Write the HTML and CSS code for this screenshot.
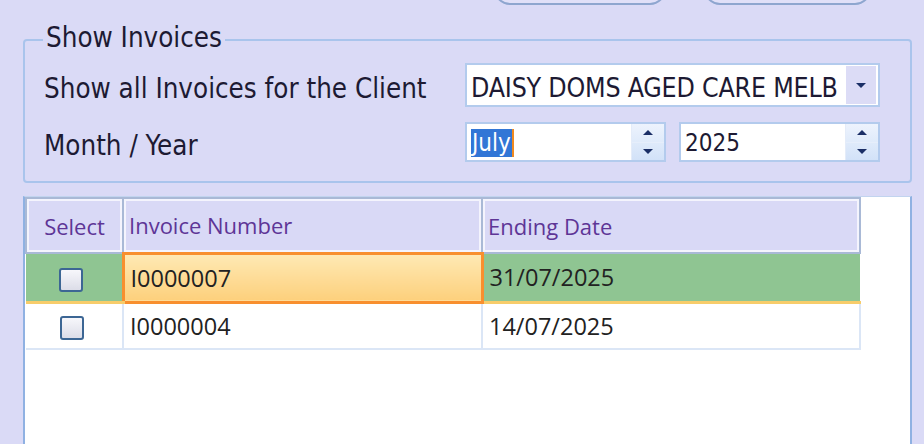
FILE: index.html
```html
<!DOCTYPE html>
<html>
<head>
<meta charset="utf-8">
<link rel="stylesheet" href="styles.css">
</head>
<body>
<div class="page">
  <div class="topbar">
    <div class="topbtn b1"></div>
    <div class="topbtn b2"></div>
  </div>
  <fieldset class="group">
    <legend class="legend">Show Invoices</legend>
    <div class="row r1">
      <span class="label">Show all Invoices for the Client</span>
      <div class="combo">
        <span class="combo-text">DAISY DOMS AGED CARE MELB</span>
        <span class="drop"><svg width="12" height="7" viewBox="0 0 12 7"><path d="M1 1h10L6 6z" fill="#1b2f66"/></svg></span>
      </div>
    </div>
    <div class="row r2">
      <span class="label">Month / Year</span>
      <div class="spins">
        <div class="spin">
          <span class="spin-text"><span class="sel">July</span><span class="caret"></span></span>
          <span class="spinbtn">
            <span class="half"><svg width="12" height="7" viewBox="0 0 12 7"><path d="M1 6h10L6 1z" fill="#1b2f66"/></svg></span>
            <span class="half"><svg width="12" height="7" viewBox="0 0 12 7"><path d="M1 1h10L6 6z" fill="#1b2f66"/></svg></span>
          </span>
        </div>
        <div class="spin">
          <span class="spin-text">2025</span>
          <span class="spinbtn">
            <span class="half"><svg width="12" height="7" viewBox="0 0 12 7"><path d="M1 6h10L6 1z" fill="#1b2f66"/></svg></span>
            <span class="half"><svg width="12" height="7" viewBox="0 0 12 7"><path d="M1 1h10L6 6z" fill="#1b2f66"/></svg></span>
          </span>
        </div>
      </div>
    </div>
  </fieldset>
  <div class="grid">
    <table class="tbl">
      <colgroup><col class="c1"><col class="c2"><col class="c3"></colgroup>
      <thead>
        <tr><th class="hc">Select</th><th>Invoice Number</th><th>Ending Date</th></tr>
      </thead>
      <tbody>
        <tr class="focused">
          <td class="chk"><span class="box"></span></td>
          <td class="fcell">I0000007</td>
          <td>31/07/2025</td>
        </tr>
        <tr class="plain">
          <td class="chk"><span class="box"></span></td>
          <td>I0000004</td>
          <td>14/07/2025</td>
        </tr>
      </tbody>
    </table>
  </div>
</div>
</body>
</html>
```
FILE: styles.css
```css
html, body {
  margin: 0;
  padding: 0;
}
body {
  background: #dadaf6;
  width: 924px;
  height: 444px;
  overflow: hidden;
  font-family: "DejaVu Sans Condensed", "DejaVu Sans", sans-serif;
  color: #1d1a33;
}
.page {
  display: flex;
  flex-direction: column;
}
.topbar {
  height: 5px;
  overflow: hidden;
  display: flex;
  align-items: flex-end;
  padding-left: 494px;
  gap: 38px;
}
.topbtn {
  height: 40px;
  flex: none;
  border: 2px solid #8ea6cf;
  border-radius: 16px;
  background: #e0e0f8;
  box-sizing: border-box;
}
.b1 { width: 172px; }
.b2 { width: 167px; }

.group {
  margin: 21px 0 0 23px;
  width: 889px;
  height: 157px;
  box-sizing: border-box;
  border: 2px solid #a9c4ec;
  border-radius: 4px;
  padding: 4px 30px 0 19px;
  min-width: 0;
}
.legend {
  font-size: 27.5px;
  padding: 0 3px;
  margin-left: -1px;
  line-height: 28px;
  position: relative;
  top: -3px;
}
.row {
  display: flex;
  align-items: center;
  justify-content: space-between;
}
.r1 { height: 44px; margin-top: 5px; }
.r2 { height: 40px; margin-top: 15px; }
.label {
  font-size: 27.5px;
  line-height: 30px;
  padding-top: 6px;
}
.combo {
  width: 415px;
  height: 44px;
  box-sizing: border-box;
  border: 2px solid #b3cbed;
  background: #fff;
  display: flex;
  align-items: center;
  padding: 0 2px 0 4px;
}
.combo-text {
  flex: 1;
  font-size: 26.5px;
  letter-spacing: -0.2px;
  white-space: nowrap;
  overflow: hidden;
  padding-top: 4px;
}
.drop {
  width: 30px;
  height: 38px;
  background: #dcdcf6;
  display: flex;
  align-items: center;
  justify-content: center;
}
.spins {
  display: flex;
  gap: 13px;
}
.spin {
  width: 201px;
  height: 40px;
  box-sizing: border-box;
  border: 2px solid #b3cbed;
  background: #fff;
  display: flex;
  align-items: stretch;
}
.spin-text {
  flex: 1;
  display: flex;
  align-items: center;
  padding-left: 4px;
  padding-top: 2px;
  font-size: 24px;
}
.sel {
  background: #3176d6;
  color: #fff;
  line-height: 28px;
  padding: 0 1px;
}
.caret {
  width: 2px;
  height: 28px;
  background: #f08a20;
}
.spinbtn {
  width: 32px;
  display: flex;
  flex-direction: column;
  background: linear-gradient(#edf3fd, #d2e2f8);
  border-left: 1px solid #e4ecf9;
}
.half {
  flex: 1;
  display: flex;
  align-items: center;
  justify-content: center;
}
.half + .half {
  border-top: 1px solid #e6eefb;
}

.grid {
  margin: 13px 0 0 23px;
  width: 889px;
  height: 260px;
  box-sizing: border-box;
  border-left: 2px solid #8fb1e2;
  border-right: 2px solid #8fb1e2;
  border-top: 1px solid #c2d4ef;
  background: #fff;
}
.tbl {
  border-collapse: collapse;
  table-layout: fixed;
  width: 834px;
  font-family: "Open Sans", "Noto Sans", sans-serif;
  font-size: 23.5px;
}
.c1 { width: 97px; }
.c2 { width: 359px; }
.c3 { width: 378px; }
th {
  height: 55px;
  box-sizing: border-box;
  background: #d9d9f6;
  color: #5e3596;
  font-weight: normal;
  font-size: 22px;
  text-align: left;
  padding: 0 5px;
  border: 2px solid #a9b9d6;
  box-shadow: inset 0 0 0 2px #f4f4fd;
}
th.hc { text-align: center; padding: 0; }
td {
  padding: 0 6px;
  white-space: nowrap;
  color: #222;
}
.focused td {
  height: 46px;
  background: #8fc592;
  border-top: 2px solid #f1eb96;
  border-bottom: 3px solid #f7cc6a;
}
.focused td.fcell {
  background: linear-gradient(#fee9b4, #fdd07c);
  border: 3px solid #f88f2e;
}
.plain td {
  height: 44px;
  border-bottom: 2px solid #dbe6f6;
  border-right: 2px solid #dbe6f6;
}
td.chk {
  text-align: center;
  padding: 0 5px 0 0;
  border-right: 2px solid #dbe6f6;
}
.focused td.chk { border-right: none; }
.box {
  display: inline-block;
  width: 24px;
  height: 24px;
  box-sizing: border-box;
  border: 2px solid #3c6694;
  border-radius: 3px;
  background: linear-gradient(#f7f7fb, #dcdde8);
  vertical-align: middle;
}
```
